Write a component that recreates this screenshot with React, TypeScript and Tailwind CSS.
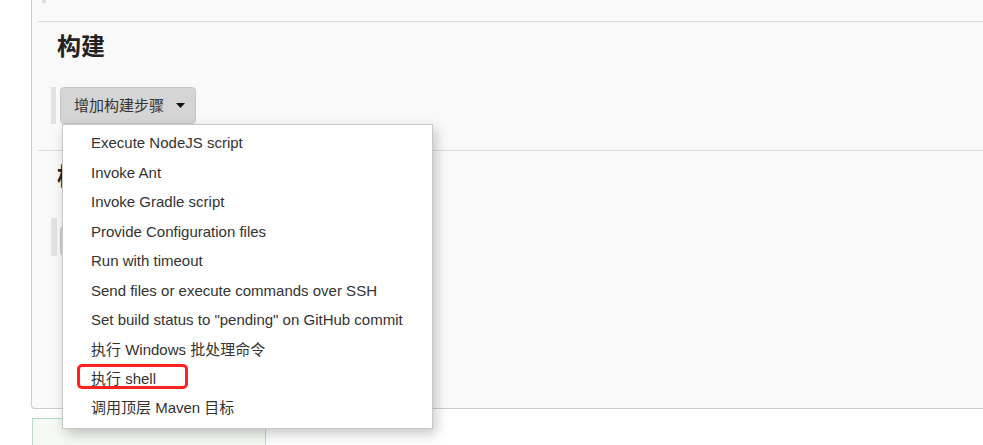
import React from "react";

const items = [
  "Execute NodeJS script",
  "Invoke Ant",
  "Invoke Gradle script",
  "Provide Configuration files",
  "Run with timeout",
  "Send files or execute commands over SSH",
  'Set build status to "pending" on GitHub commit',
  "执行 Windows 批处理命令",
  "执行 shell",
  "调用顶层 Maven 目标",
];

export default function App() {
  return (
    <div className="relative w-[983px] h-[445px] overflow-hidden bg-white text-[#333] font-['Liberation_Sans','Noto_Sans_CJK_SC',sans-serif]">
      <div className="ml-[31px] h-[409px] border-l border-b border-[#cccccc] rounded-bl-[4px] bg-[#f9f9f9] flex flex-col">
        <div className="ml-[10px] w-[4px] h-[3px] bg-[#dddddd]" />
        <div className="ml-[6px] mt-[18px] border-t border-[#dcdcdc]" />
        <h2 className="ml-[25px] mt-[11px] text-[24px] font-bold leading-[28px] text-[#222]">构建</h2>
        <div className="ml-[19px] mt-[26px] flex items-stretch">
          <div className="w-[5px] bg-[#e2e2e2]" />
          <div className="ml-[4px] h-[37px] w-[136px] rounded-[4px] border border-[#c6c6c6] bg-[#d5d5d5] flex items-center pl-[13px]">
            <span className="text-[15px] text-[#333] leading-none">增加构建步骤</span>
            <svg className="ml-[12px]" width="9" height="5" viewBox="0 0 9 5">
              <path d="M0 0 L9 0 L4.5 5 Z" fill="#111" />
            </svg>
          </div>
        </div>
        <div className="ml-[6px] mt-[26px] border-t border-[#dcdcdc]" />
        <h2 className="ml-[25px] mt-[12px] text-[24px] font-bold leading-[28px] text-[#222]">构建后操作</h2>
        <div className="ml-[19px] mt-[27px] flex items-stretch">
          <div className="w-[6px] h-[38px] bg-[#e2e2e2]" />
          <div className="ml-[3px] mt-[8px] h-[30px] w-[136px] rounded-[4px] border border-[#c6c6c6] bg-[#d5d5d5]" />
        </div>
      </div>
      <div className="ml-[32px] mt-[9px] w-[234px] h-[40px] border border-[#b6dcc2] bg-[#f5faf3]" />

      <div className="absolute left-[62px] top-[124px] w-[371px] h-[305px] bg-white border border-[#c8c8c8] shadow-[3px_5px_12px_rgba(0,0,0,0.22)] py-[4px]">
        {items.map((t) => (
          <div key={t} className="h-[29.45px] flex items-center pl-[28px] text-[15px] text-[#333] whitespace-nowrap">
            {t}
          </div>
        ))}
      </div>
      <div className="absolute left-[77px] top-[364px] w-[111px] h-[25px] border-[3px] border-[#ff2020] rounded-[5px]" />
    </div>
  );
}
